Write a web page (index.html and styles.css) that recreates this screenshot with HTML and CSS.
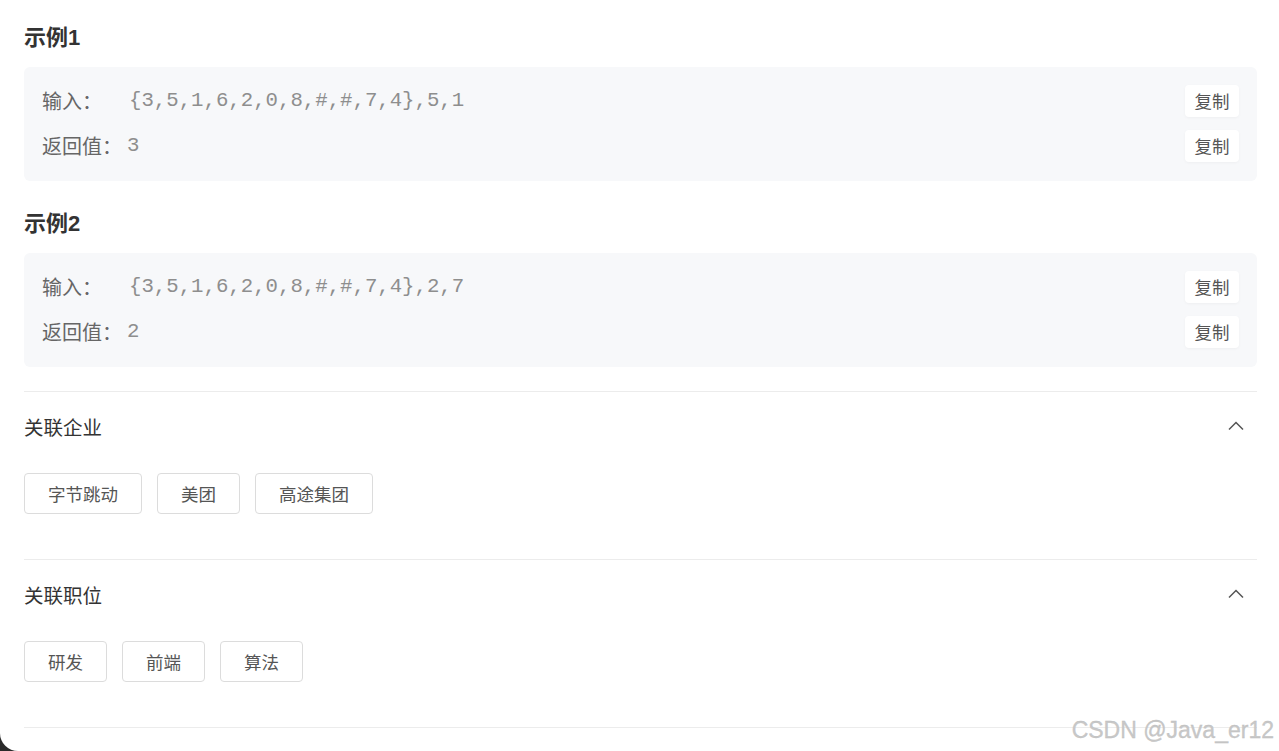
FILE: index.html
```html
<!DOCTYPE html>
<html lang="zh-CN">
<head>
<meta charset="utf-8">
<title>示例</title>
<link rel="stylesheet" href="styles.css">
</head>
<body>
<div class="page">
  <h3 class="example-title">示例1</h3>
  <div class="example-box">
    <div class="example-row">
      <span class="label">输入：</span><span class="value value-input">{3,5,1,6,2,0,8,#,#,7,4},5,1</span>
      <button class="copy-btn">复制</button>
    </div>
    <div class="example-row">
      <span class="label">返回值：</span><span class="value">3</span>
      <button class="copy-btn">复制</button>
    </div>
  </div>

  <h3 class="example-title second">示例2</h3>
  <div class="example-box">
    <div class="example-row">
      <span class="label">输入：</span><span class="value value-input">{3,5,1,6,2,0,8,#,#,7,4},2,7</span>
      <button class="copy-btn">复制</button>
    </div>
    <div class="example-row">
      <span class="label">返回值：</span><span class="value">2</span>
      <button class="copy-btn">复制</button>
    </div>
  </div>

  <section class="related first">
    <div class="related-head">
      <span class="related-title">关联企业</span>
      <svg class="chevron" width="16" height="10" viewBox="0 0 16 10"><path d="M1 8.5 L8 1.5 L15 8.5" fill="none" stroke="#555" stroke-width="1.5"/></svg>
    </div>
    <div class="tags">
      <span class="tag">字节跳动</span>
      <span class="tag">美团</span>
      <span class="tag">高途集团</span>
    </div>
  </section>

  <section class="related">
    <div class="related-head">
      <span class="related-title">关联职位</span>
      <svg class="chevron" width="16" height="10" viewBox="0 0 16 10"><path d="M1 8.5 L8 1.5 L15 8.5" fill="none" stroke="#555" stroke-width="1.5"/></svg>
    </div>
    <div class="tags">
      <span class="tag">研发</span>
      <span class="tag">前端</span>
      <span class="tag">算法</span>
    </div>
  </section>
  <div class="end-line"></div>

  <div class="watermark">CSDN @Java_er12</div>
</div>
</body>
</html>
```

FILE: styles.css
```css
html, body {
  margin: 0;
  padding: 0;
  height: 100%;
}
body {
  background: #2a2a2a;
  font-family: "Liberation Sans", "Noto Sans CJK SC", sans-serif;
  overflow: hidden;
}
.page {
  position: relative;
  background: #ffffff;
  min-height: 100vh;
  box-sizing: border-box;
  padding: 23px 22px 0 24px;
  border-bottom-left-radius: 18px;
}
.example-title {
  margin: 0 0 14px 0;
  font-size: 22px;
  line-height: 30px;
  font-weight: 700;
  color: #333;
}
.example-title.second {
  margin-top: 28px;
}
.example-box {
  background: #f7f8fa;
  border-radius: 6px;
  padding: 11px 18px 13px 18px;
}
.example-row {
  display: flex;
  align-items: center;
  height: 45px;
}
.label {
  font-size: 20px;
  color: #666;
  font-family: "Noto Sans CJK SC", sans-serif;
  line-height: 28px;
}
.value {
  font-family: "Liberation Mono", monospace;
  font-size: 20.7px;
  color: #8e8e8e;
  margin-left: 5px;
  flex: 1;
}
.value-input {
  margin-left: 27px;
}
.copy-btn {
  border: none;
  background: #fff;
  border-radius: 4px;
  width: 54px;
  height: 32px;
  padding: 0;
  font-size: 17.5px;
  color: #555;
  font-family: "Noto Sans CJK SC", sans-serif;
  box-shadow: 0 1px 3px rgba(0,0,0,0.04);
}
.related {
  border-top: 1px solid #ececec;
  padding-bottom: 45px;
}
.related.first {
  margin-top: 24px;
}
.related-head {
  display: flex;
  align-items: center;
  justify-content: space-between;
  height: 28px;
  padding-top: 20px;
}
.related-title {
  font-size: 19.5px;
  color: #333;
  font-family: "Noto Sans CJK SC", sans-serif;
}
.chevron {
  margin-right: 13px;
}
.tags {
  display: flex;
  gap: 15px;
  margin-top: 33px;
}
.tag {
  display: inline-flex;
  align-items: center;
  height: 39px;
  padding: 0 23px;
  border: 1px solid #dcdcdc;
  border-radius: 4px;
  font-size: 17.5px;
  color: #555;
  font-family: "Noto Sans CJK SC", sans-serif;
}
.end-line {
  border-top: 1px solid #ececec;
}
.watermark {
  position: absolute;
  right: 5px;
  bottom: 7px;
  font-family: "Liberation Sans", sans-serif;
  font-size: 23px;
  color: #c8c8c8;
  -webkit-text-stroke: 0.3px #bdbdbd;
}
```
